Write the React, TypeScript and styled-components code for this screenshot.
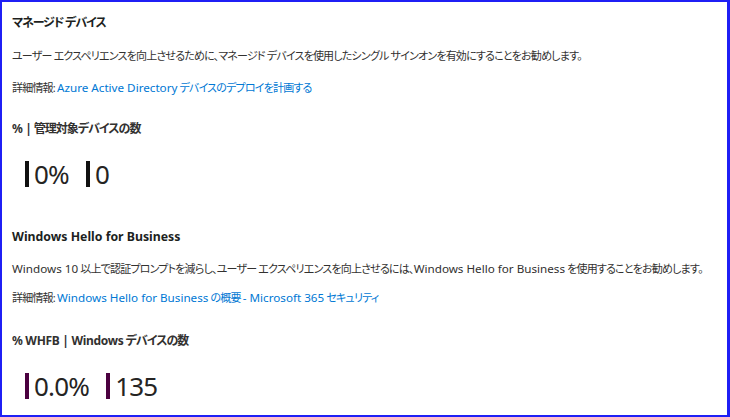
import styled, { createGlobalStyle } from 'styled-components'

const GlobalStyle = createGlobalStyle`
  html, body {
    margin: 0;
    padding: 0;
    background: #ffffff;
  }
  body {
    font-family: "Segoe UI", "Noto Sans", "Noto Sans CJK JP", sans-serif;
    color: #323130;
  }
`

const Frame = styled.div`
  box-sizing: border-box;
  width: 730px;
  height: 417px;
  border: 2px solid #1f1ff5;
  border-right-width: 3px;
  padding: 11px 10px 0 10px;
  overflow: hidden;
  font-feature-settings: "palt";
`

const Section = styled.section`
  display: flex;
  flex-direction: column;
  margin-bottom: 37px;
`

// japanese glyphs run narrower in the original (Yu Gothic UI), so the line
// is sized for them and latin runs get their own size back through <En>
const En = styled.span`
  font-size: 1.06em;
  letter-spacing: 0;
`

const Title = styled.h2`
  margin: 0;
  font-size: 12px;
  line-height: 20px;
  font-weight: 700;
  letter-spacing: -1.1px;
  color: #201f1e;
  white-space: nowrap;

  ${En} {
    font-size: 12.3px;
  }
`

const Text = styled.p<{ $gap: number }>`
  margin: ${(p) => p.$gap}px 0 0;
  font-size: 11px;
  line-height: 18px;
  letter-spacing: -0.8px;
  color: #323130;
  white-space: nowrap;
`

const Link = styled.a`
  color: #0078d4;
  text-decoration: none;
`

const MetricLabel = styled.div<{ $gap: number }>`
  margin-top: ${(p) => p.$gap}px;
  font-size: 12px;
  line-height: 20px;
  font-weight: 700;
  letter-spacing: -1px;
  color: #323130;
  white-space: nowrap;

  ${En} {
    font-size: 12px;
    letter-spacing: -0.3px;
  }
`

const Metrics = styled.div`
  display: flex;
  align-items: center;
  gap: 17px;
  margin-top: 19px;
  padding-left: 13px;
`

const Metric = styled.div<{ $color: string }>`
  display: flex;
  align-items: center;
  gap: 5px;
  font-family: "Segoe UI", "Noto Sans", sans-serif;
  font-size: 26px;
  line-height: 32px;
  letter-spacing: -0.8px;
  color: #252423;

  &::before {
    content: '';
    display: block;
    flex-shrink: 0;
    width: 4px;
    height: 26px;
    background: ${(p) => p.$color};
  }
`

export default function App() {
  return (
    <>
      <GlobalStyle />
      <Frame>
        <Section>
          <Title>マネージド デバイス</Title>
          <Text $gap={14}>
            ユーザー エクスペリエンスを向上させるために、マネージド デバイスを使用したシングル サインオンを有効にすることをお勧めします。
          </Text>
          <Text $gap={14}>
            詳細情報: <Link href="#"><En>Azure Active Directory</En> デバイスのデプロイを計画する</Link>
          </Text>
          <MetricLabel $gap={22}><En>% |</En> 管理対象デバイスの数</MetricLabel>
          <Metrics>
            <Metric $color="#111111">0%</Metric>
            <Metric $color="#111111">0</Metric>
          </Metrics>
        </Section>
        <Section>
          <Title><En>Windows Hello for Business</En></Title>
          <Text $gap={13}>
            <En>Windows 10</En> 以上で認証プロンプトを減らし、ユーザー エクスペリエンスを向上させるには、<En>Windows Hello for Business</En> を使用することをお勧めします。
          </Text>
          <Text $gap={11}>
            詳細情報: <Link href="#"><En>Windows Hello for Business</En> の概要 <En>- Microsoft 365</En> セキュリティ</Link>
          </Text>
          <MetricLabel $gap={24}><En>% WHFB | Windows</En> デバイスの数</MetricLabel>
          <Metrics>
            <Metric $color="#4b003f">0.0%</Metric>
            <Metric $color="#4b003f">135</Metric>
          </Metrics>
        </Section>
      </Frame>
    </>
  )
}
